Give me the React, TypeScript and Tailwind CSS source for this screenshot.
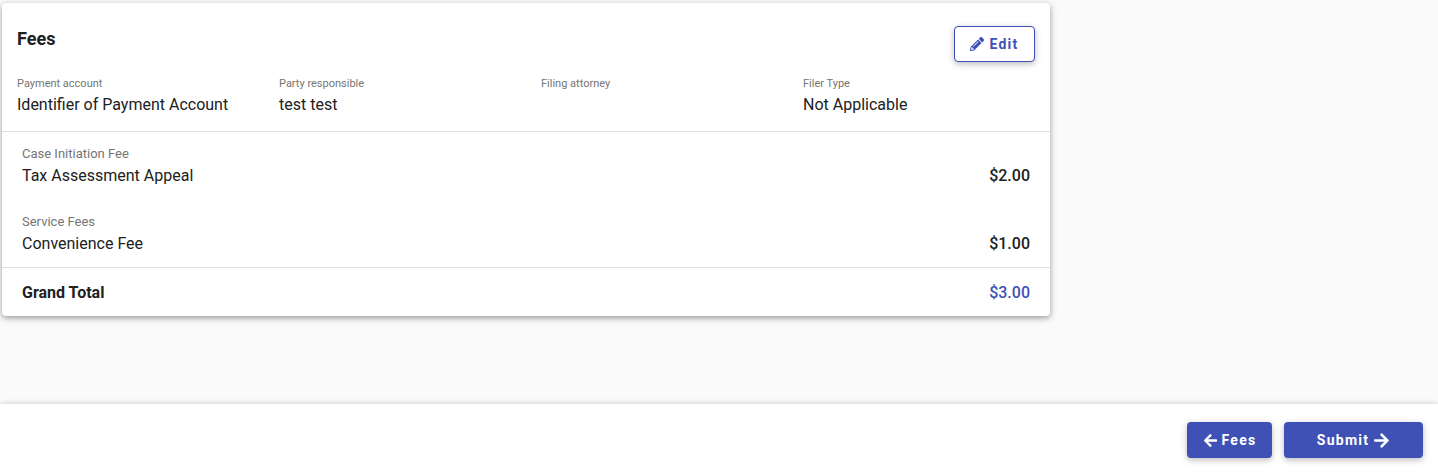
import { FaArrowLeft, FaArrowRight, FaPencilAlt } from "react-icons/fa";

type Detail = {
  label: string;
  value: string;
};

type Fee = {
  category: string;
  name: string;
  amount: string;
};

const details: Detail[] = [
  { label: "Payment account", value: "Identifier of Payment Account" },
  { label: "Party responsible", value: "test test" },
  { label: "Filing attorney", value: "" },
  { label: "Filer Type", value: "Not Applicable" },
];

const fees: Fee[] = [
  { category: "Case Initiation Fee", name: "Tax Assessment Appeal", amount: "$2.00" },
  { category: "Service Fees", name: "Convenience Fee", amount: "$1.00" },
];

const buttonBase =
  "flex h-9 cursor-pointer items-center justify-center rounded text-sm font-bold tracking-[1.25px] shadow-[0_2px_5px_rgba(0,0,0,0.16),0_2px_10px_rgba(0,0,0,0.12)]";

function FeesCard() {
  return (
    <section className="max-w-[1048px] rounded bg-white shadow-[0_2px_5px_rgba(0,0,0,0.26),0_2px_10px_rgba(0,0,0,0.16)]">
      <header className="flex items-start justify-between px-[15px] pt-[23px]">
        <h2 className="text-lg leading-[26px] font-bold">Fees</h2>
        <button
          type="button"
          className={`${buttonBase} w-[81px] gap-[5px] border border-[#3f51b5] bg-white text-[#3f51b5]`}
        >
          <FaPencilAlt className="size-[14px]" />
          Edit
        </button>
      </header>

      <dl className="grid grid-cols-4 border-b border-[#dfdfdf] pt-[14px] pb-[13px]">
        {details.map((d) => (
          <div key={d.label} className="px-[15px]">
            <dt className="text-[11px] leading-4 text-[#757575]">{d.label}</dt>
            <dd className="text-base leading-[26px]">{d.value}</dd>
          </div>
        ))}
      </dl>

      <div className="flex flex-col gap-6 border-b border-[#dfdfdf] px-5 pt-3 pb-[11px]">
        {fees.map((fee) => (
          <div key={fee.name} className="flex items-end justify-between">
            <div>
              <p className="text-[13px] leading-5 text-[#757575]">{fee.category}</p>
              <p className="text-base leading-6">{fee.name}</p>
            </div>
            <span className="text-base leading-6 font-medium">{fee.amount}</span>
          </div>
        ))}
      </div>

      <div className="flex justify-between px-5 pt-[13px] pb-[11px] text-base leading-6">
        <span className="font-bold">Grand Total</span>
        <span className="font-medium text-[#3f51b5]">$3.00</span>
      </div>
    </section>
  );
}

export default function App() {
  return (
    <div className="flex min-h-screen flex-col bg-[#fafafa] font-[Roboto,sans-serif] text-[#212121]">
      <main className="flex-1 px-[2px] pt-[3px] pb-6">
        <FeesCard />
      </main>

      <footer className="flex justify-end gap-3 bg-white px-[15px] pt-[18px] pb-4 shadow-[0_0_6px_rgba(0,0,0,0.2)]">
        <button type="button" className={`${buttonBase} w-[85px] gap-1 bg-[#3f51b5] text-white`}>
          <FaArrowLeft className="size-[15px]" />
          Fees
        </button>
        <button type="button" className={`${buttonBase} w-[139px] gap-1 bg-[#3f51b5] text-white`}>
          Submit
          <FaArrowRight className="size-[17px]" />
        </button>
      </footer>
    </div>
  );
}
